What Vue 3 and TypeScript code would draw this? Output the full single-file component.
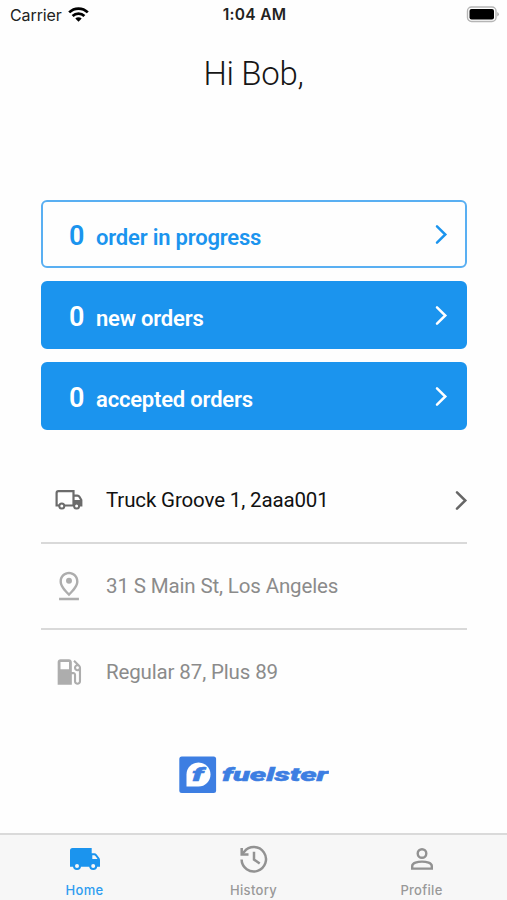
<script setup lang="ts">
interface OrderCard {
  count: number
  label: string
  outlined?: boolean
}

const orders: OrderCard[] = [
  { count: 0, label: 'order in progress', outlined: true },
  { count: 0, label: 'new orders' },
  { count: 0, label: 'accepted orders' },
]
</script>

<template>
  <div class="screen">
    <header class="status">
      <div class="carrier">
        <span>Carrier</span>
        <svg width="21" height="15" viewBox="0 0 21 15">
          <g fill="none" stroke="#000" stroke-width="2.7">
            <path d="M1.2 5.4a13.2 13.2 0 0 1 18.6 0" />
            <path d="M4.6 9a8.4 8.4 0 0 1 11.8 0" />
          </g>
          <path d="M10.5 14.8 7.3 11.5a4.6 4.6 0 0 1 6.4 0z" />
        </svg>
      </div>
      <span class="time">1:04 AM</span>
      <div class="power">
        <svg width="33" height="17" viewBox="0 0 33 17">
          <rect x="1.500" y="1" width="28.5" height="14.5" rx="4" fill="#fff" stroke="#b5b5b5" stroke-width="1.4" />
          <rect x="3.500" y="3" width="24.5" height="10.5" rx="2" />
          <path d="M31.300 6v4.500q1.500-.7 1.500-2.200T31.300 6z" fill="#aaa" />
        </svg>
      </div>
    </header>

    <h1>Hi Bob,</h1>

    <main>
      <div class="cards">
        <button v-for="order in orders" :key="order.label" class="card" :class="{ outlined: order.outlined }">
          <span class="count">{{ order.count }}</span>
          <span class="label">{{ order.label }}</span>
          <svg class="chevron" width="13" height="21" viewBox="0 0 13 21">
            <path d="M2 2.300 10.300 10.500 2 18.700" />
          </svg>
        </button>
      </div>

      <ul class="details">
        <li class="active">
          <span class="icon">
            <svg width="28" height="20" viewBox="0 0 28 20">
              <path d="M4 15.500H1.600V3q0-1.800 1.800-1.800h15.100v14.300H9M18.500 5.700h3.800q1.500 0 2.300 1.300l1.700 3v5.500h-1.500" fill="none" stroke="#6b6b6b" stroke-width="2.200" />
              <path d="M19 10h7.500v6H19z" fill="#6b6b6b" />
              <circle cx="6.800" cy="16" r="2.500" fill="#fff" stroke="#6b6b6b" stroke-width="2" />
              <circle cx="21.600" cy="16" r="2.500" fill="#fff" stroke="#6b6b6b" stroke-width="2" />
            </svg>
          </span>
          <span class="text">Truck Groove 1, 2aaa001</span>
          <svg class="chevron" width="13" height="21" viewBox="0 0 13 21">
            <path d="M2 2.300 10.300 10.500 2 18.700" />
          </svg>
        </li>
        <li>
          <span class="icon">
            <svg width="34" height="34" viewBox="0 0 24 24" fill="#adadad">
              <path d="M12 3.700c2.200 0 5 1.500 5 5.200 0 2.200-1.700 4.700-5 8-3.300-3.300-5-5.800-5-8 0-3.700 2.800-5.200 5-5.200m0-1.700C8.700 2 5.300 4.500 5.300 8.900c0 3.100 2.300 6.400 6.700 10.300 4.400-3.900 6.700-7.200 6.700-10.300C18.700 4.500 15.300 2 12 2zM12 6.200a2.100 2.100 0 1 0 0 4.200 2.100 2.100 0 0 0 0-4.200zM5 20.300h14V22H5z" />
            </svg>
          </span>
          <span class="text">31 S Main St, Los Angeles</span>
        </li>
        <li>
          <span class="icon">
            <svg width="34" height="34" viewBox="0 0 24 24" fill="#adadad">
              <path d="M19.770 7.230l.01-.01-3.720-3.720L15 4.560l2.110 2.110c-.94.36-1.610 1.260-1.610 2.330 0 1.380 1.120 2.500 2.500 2.500.36 0 .69-.08 1-.21v7.210c0 .55-.45 1-1 1s-1-.45-1-1V14c0-1.100-.9-2-2-2h-1V5c0-1.100-.9-2-2-2H6c-1.100 0-2 .9-2 2v16h10v-7.500h1.500v5c0 1.380 1.120 2.500 2.500 2.500s2.500-1.120 2.500-2.500V9c0-.69-.28-1.320-.73-1.770zM12 10H6V5h6v5zm6 0c-.55 0-1-.45-1-1s.45-1 1-1 1 .45 1 1-.45 1-1 1z" />
            </svg>
          </span>
          <span class="text">Regular 87, Plus 89</span>
        </li>
      </ul>

      <div class="brand">
        <svg width="150" height="38" viewBox="0 0 150 38">
          <rect x="0.300" y="0.500" width="36.800" height="36.500" rx="2.500" fill="#3d7ee2" />
          <path d="M7.500 30.500V18.500a12 12 0 1 1 12 12z" fill="#fff" />
          <text class="monogram" x="13" y="25" textLength="11.500" lengthAdjust="spacingAndGlyphs">f</text>
          <text class="wordmark" x="43" y="25" textLength="106" lengthAdjust="spacingAndGlyphs">fuelster</text>
        </svg>
      </div>
    </main>

    <nav>
      <a class="selected">
        <span class="tab-icon">
          <svg width="30" height="22" viewBox="0 0 30 22">
            <path d="M2.500 0h19.200v5.200h2.600q1.500 0 2.400 1.200l2.500 3.300q.8 1 .8 2.300v6.700H0V2.500Q0 0 2.500 0z" fill="#1b94ee" />
            <path d="M22.300 7.200h1.800q.8 0 1.300.7l2.200 3.100h-5.300z" fill="#f7f7f7" />
            <circle cx="7" cy="18" r="3" fill="#f7f7f7" stroke="#1b94ee" stroke-width="2" />
            <circle cx="23.200" cy="18" r="3" fill="#f7f7f7" stroke="#1b94ee" stroke-width="2" />
          </svg>
        </span>
        <span>Home</span>
      </a>
      <a>
        <span class="tab-icon">
          <svg width="28" height="28" viewBox="0 0 28 28" fill="none" stroke="#929292" stroke-width="2.500">
            <path d="M1.600 14.500A12.200 12.200 0 1 0 4.300 6.600L2 9.200" />
            <path d="M1.700 3v6.500h6.800M14 6.800v7.700l5.700 4" />
          </svg>
        </span>
        <span>History</span>
      </a>
      <a class="profile">
        <span class="tab-icon">
          <svg width="22" height="22" viewBox="0 0 22 22" fill="none" stroke="#929292" stroke-width="2.400">
            <circle cx="11" cy="5.500" r="4.300" />
            <path d="M1.200 20.600v-2.500c0-3 5.300-4.500 9.800-4.500s9.800 1.500 9.800 4.500v2.500z" />
          </svg>
        </span>
        <span>Profile</span>
      </a>
    </nav>
  </div>
</template>

<style>
body {
  background: #fefefe;
}
</style>

<style scoped>
.screen {
  box-sizing: border-box;
  width: 507px;
  height: 900px;
  display: flex;
  flex-direction: column;
  overflow: hidden;
  font-family: Roboto, "Liberation Sans", sans-serif;
}
.status {
  display: grid;
  grid-template-columns: 1fr auto 1fr;
  align-items: center;
  height: 30px;
  padding: 0 8px 0 10px;
  font: 16px/30px Inter, sans-serif;
  color: #222;
}
.carrier {
  display: flex;
  align-items: center;
  gap: 6px;
  letter-spacing: -0.1px;
}
.carrier svg {
  margin-top: -2px;
}
.time {
  font-weight: 600;
  font-size: 15.5px;
  letter-spacing: 0.3px;
}
.power {
  display: flex;
  justify-content: flex-end;
  margin-top: -2px;
}
h1 {
  margin: 24px 0 0;
  height: 40px;
  font-size: 33px;
  line-height: 40px;
  font-weight: 300;
  letter-spacing: -0.3px;
  text-align: center;
  color: #161616;
}
main {
  flex: 1;
  padding: 106px 40px 0 41px;
}
.cards {
  display: flex;
  flex-direction: column;
  gap: 13px;
}
.card {
  box-sizing: border-box;
  display: flex;
  align-items: baseline;
  height: 68px;
  padding: 0 17px 0 26px;
  border: 2px solid #1b94ee;
  border-radius: 6px;
  background: #1b94ee;
  color: #fff;
  font-family: inherit;
  font-weight: 600;
  text-align: left;
}
.card.outlined {
  border-color: #59aff2;
  background: #fefefe;
  color: #1b94ee;
}
.count {
  width: 27px;
  font-size: 27px;
  line-height: 68px;
}
.label {
  flex: 1;
  font-size: 22px;
  letter-spacing: -0.19px;
}
.chevron {
  fill: none;
  stroke: currentColor;
  stroke-width: 2.5;
  stroke-linecap: round;
}
.card .chevron {
  align-self: center;
}
.details {
  margin: 28px 0 0;
  padding: 0;
  list-style: none;
}
.details li {
  box-sizing: border-box;
  display: flex;
  align-items: center;
  height: 86px;
  border-bottom: 2px solid #d9d9d9;
  color: #8b8b8b;
}
.details li:last-child {
  height: 84px;
  border-bottom: 0;
}
.details .active {
  color: #111;
}
.active .chevron {
  margin-right: -1px;
  color: #666;
}
.icon {
  display: flex;
  justify-content: center;
  width: 56px;
}
.text {
  flex: 1;
  margin-left: 9px;
  font-size: 20.5px;
  letter-spacing: -0.14px;
}
.brand {
  display: flex;
  margin: 42px 0 0 138px;
}
.monogram,
.wordmark {
  font-family: Roboto, sans-serif;
  font-weight: 900;
  font-style: italic;
  fill: #3d7ee2;
  stroke: #3d7ee2;
  stroke-width: 0.5px;
}
.monogram {
  font-size: 18px;
}
.wordmark {
  font-size: 19px;
}
nav {
  box-sizing: border-box;
  display: grid;
  grid-template-columns: repeat(3, 1fr);
  height: 67px;
  border-top: 2px solid #dadada;
  background: #f7f7f7;
  font: 500 13px/18px Inter, sans-serif;
  letter-spacing: 0.3px;
  color: #999;
}
nav a {
  display: flex;
  flex-direction: column;
  align-items: center;
}
.profile {
  padding-right: 2px;
}
.tab-icon {
  display: flex;
  align-items: center;
  height: 46px;
  padding-top: 2px;
  box-sizing: border-box;
}
.selected {
  color: #2e9df0;
}
</style>
